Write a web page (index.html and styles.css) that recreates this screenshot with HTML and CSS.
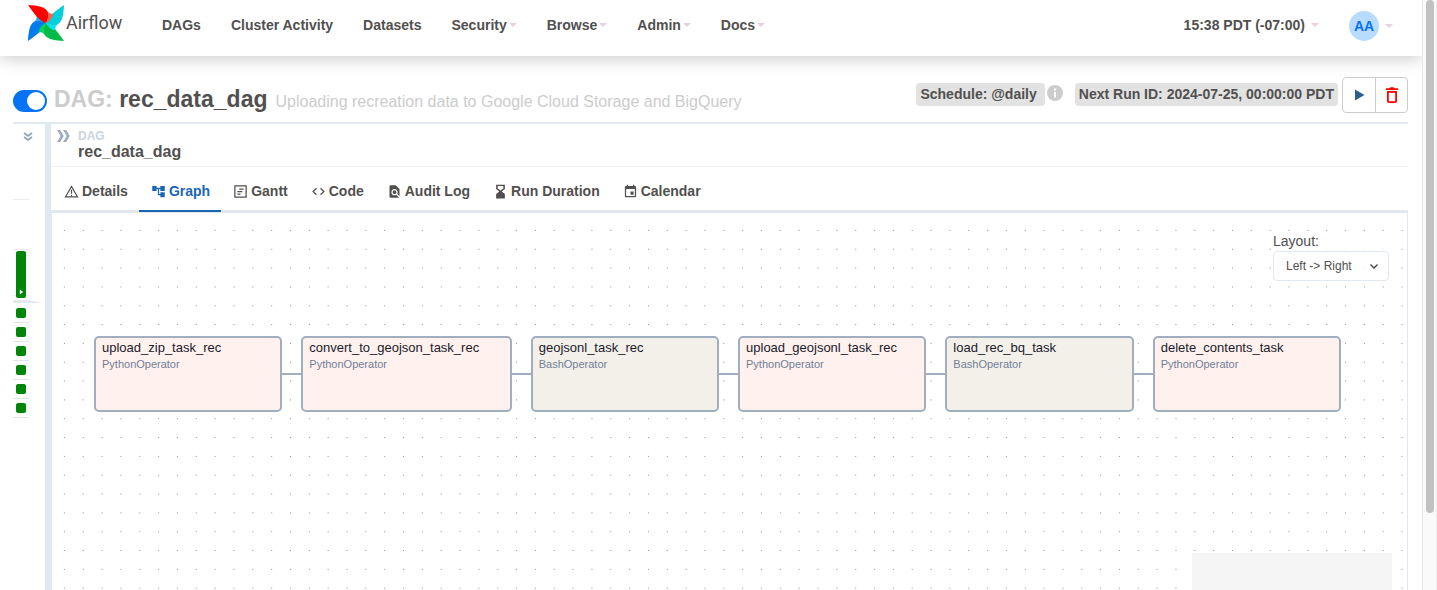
FILE: index.html
```html
<!DOCTYPE html>
<html lang="en">
<head>
<meta charset="utf-8">
<title>rec_data_dag - Graph - Airflow</title>
<link rel="stylesheet" href="styles.css">
</head>
<body>
<div class="page">
  <header class="navbar">
    <a class="brand" href="#">
      <svg class="brand-mark" viewBox="0 0 36 36" aria-hidden="true">
        <defs>
          <path id="blade" d="M0 0C8 .5 19 1 20.500 9C20.800 12 19.500 15 18 18C12 16.500 7 10 0 0Z"/>
          <path id="fold" d="M20 7C21.500 8.500 23.500 9 25 8.500C25.500 12 22 16 18 18C19.500 15 20.800 11 20 7Z"/>
        </defs>
        <use href="#blade" fill="#017cee" transform="rotate(270 18 18)"/>
        <use href="#fold" fill="#0cb6ff" transform="rotate(270 18 18)"/>
        <use href="#blade" fill="#00bb45" transform="rotate(180 18 18)"/>
        <use href="#fold" fill="#04d659" transform="rotate(180 18 18)"/>
        <use href="#blade" fill="#00d0dc" transform="rotate(90 18 18)"/>
        <use href="#fold" fill="#11e1ee" transform="rotate(90 18 18)"/>
        <use href="#blade" fill="#ff0000"/>
        <use href="#fold" fill="#ff6048"/>
      </svg>
      <span>Airflow</span>
    </a>
    <nav class="menu">
      <a href="#">DAGs</a>
      <a href="#">Cluster Activity</a>
      <a href="#">Datasets</a>
      <a href="#">Security<i class="caret"></i></a>
      <a href="#">Browse<i class="caret"></i></a>
      <a href="#">Admin<i class="caret"></i></a>
      <a href="#">Docs<i class="caret"></i></a>
    </nav>
    <nav class="menu menu-right">
      <a class="clock" href="#">15:38 PDT (-07:00)<i class="caret"></i></a>
      <a class="user" href="#"><span class="avatar">AA</span><i class="caret"></i></a>
    </nav>
  </header>

  <main>
    <div class="title-row">
      <input class="switch" type="checkbox" checked aria-label="Pause or unpause DAG">
      <h1><span class="muted">DAG:</span> rec_data_dag</h1>
      <span class="description">Uploading recreation data to Google Cloud Storage and BigQuery</span>
      <div class="title-side">
        <a class="tag tag-schedule" href="#">Schedule: @daily</a>
        <svg class="info" viewBox="0 0 16 16" aria-hidden="true"><circle cx="8" cy="8" r="8" fill="#ccc"/><path d="M7 3.500h2v2H7zM7 7h2v5.500H7z" fill="#fff"/></svg>
        <span class="tag">Next Run ID: 2024-07-25, 00:00:00 PDT</span>
        <div class="actions">
          <button type="button" aria-label="Trigger DAG"><svg viewBox="0 0 20 20"><path d="M6 4.500v11L15.500 10z" fill="#2c5f8a"/></svg></button>
          <button type="button" aria-label="Delete DAG"><svg viewBox="0 0 20 20"><path d="M4 3.200h3.500l1-1h3l1 1H16V5H4z" fill="#f00"/><path d="M5.900 6.900h8.200v9.200q0 1-1 1H6.900q-1 0-1-1z" fill="none" stroke="#f00" stroke-width="1.800"/></svg></button>
        </div>
      </div>
    </div>

    <div class="workspace">
      <aside class="grid-panel">
        <button class="expand" type="button" aria-label="Expand grid"><svg viewBox="0 0 10 10"><path d="M1 1l4 3 4-3M1 5l4 3 4-3" fill="none" stroke="#8fa3bb" stroke-width="1.700"/></svg></button>
        <div class="runs">
          <div class="run"><svg viewBox="0 0 6 6"><path d="M1 0v6l4-3z" fill="#fff"/></svg></div>
        </div>
        <svg class="wedge" viewBox="0 0 30 4" aria-hidden="true"><path d="M0 0h15l15 3H0z" fill="#e2e8f0"/></svg>
        <ul class="tasks">
          <li></li><li></li><li></li><li></li><li></li><li></li>
        </ul>
      </aside>

      <section class="detail">
        <div class="crumb">
          <svg class="collapse" viewBox="0 0 13 12" aria-hidden="true"><path d="M0 0h3.200l3.600 6-3.600 6H0l3.600-6zM6 0h3.200l3.600 6-3.600 6H6l3.600-6z" fill="#a0aec0"/></svg>
          <div>
            <div class="crumb-label">DAG</div>
            <div class="crumb-name">rec_data_dag</div>
          </div>
        </div>

        <div class="tabs" role="tablist">
          <button type="button" role="tab"><svg viewBox="0 0 24 24"><path d="M12 4L21.500 20.500H2.500zM12 9v6.500M12 17v2.200" fill="none" stroke="currentColor" stroke-width="2"/></svg>Details</button>
          <button class="active" type="button" role="tab" aria-selected="true"><svg viewBox="0 0 24 24"><path fill="currentColor" d="M22 11V3h-7v3H9V3H2v8h7V8h2v10h4v3h7v-8h-7v3h-2V8h2v3z"/></svg>Graph</button>
          <button type="button" role="tab"><svg viewBox="0 0 24 24"><path d="M3 3h18v18H3zM10 8h7M7 12h8M7 16h5" fill="none" stroke="currentColor" stroke-width="2"/></svg>Gantt</button>
          <button type="button" role="tab"><svg viewBox="0 0 24 24"><path d="M8.700 6.700L3.400 12l5.300 5.300M15.300 6.700l5.300 5.300-5.300 5.300" fill="none" stroke="currentColor" stroke-width="2"/></svg>Code</button>
          <button type="button" role="tab"><svg viewBox="0 0 24 24"><path fill="currentColor" d="M20 19.590V8l-6-6H6a2 2 0 0 0-2 2v16c0 1.100.890 2 1.990 2H18c.450 0 .850-.150 1.190-.400l-4.430-4.430c-.8.520-1.740.830-2.760.830-2.760 0-5-2.240-5-5s2.240-5 5-5 5 2.240 5 5c0 1.020-.310 1.960-.830 2.750L20 19.590zM9 13c0 1.660 1.340 3 3 3s3-1.340 3-3-1.340-3-3-3-3 1.340-3 3z"/></svg>Audit Log</button>
          <button type="button" role="tab"><svg viewBox="0 0 24 24"><path fill="currentColor" fill-rule="evenodd" d="M5 1v7l5 4-5 4v7h14v-7l-5-4 5-4V1zM7.500 3h9v4L12 10.500 7.500 7z"/></svg>Run Duration</button>
          <button type="button" role="tab"><svg viewBox="0 0 24 24"><path fill="currentColor" fill-rule="evenodd" d="M19 3h-1V1h-2v2H8V1H6v2H5a2 2 0 0 0-2 2v14c0 1.100.9 2 2 2h14a2 2 0 0 0 2-2V5a2 2 0 0 0-2-2zM5 8h14v11H5zM12 12h5v5h-5z"/></svg>Calendar</button>
        </div>

        <div class="graph">
          <svg class="dots" aria-hidden="true">
            <defs><pattern id="dot" width="18.840" height="18.830" patternUnits="userSpaceOnUse" x="3" y="8"><circle cx="9.400" cy="9.400" r=".6" fill="#81818a"/></pattern></defs>
            <rect width="100%" height="100%" fill="url(#dot)"/>
          </svg>
          <div class="flow">
            <div class="node python"><strong>upload_zip_task_rec</strong><span>PythonOperator</span></div>
            <i class="edge"></i>
            <div class="node python wide"><strong>convert_to_geojson_task_rec</strong><span>PythonOperator</span></div>
            <i class="edge"></i>
            <div class="node bash"><strong>geojsonl_task_rec</strong><span>BashOperator</span></div>
            <i class="edge"></i>
            <div class="node python"><strong>upload_geojsonl_task_rec</strong><span>PythonOperator</span></div>
            <i class="edge"></i>
            <div class="node bash"><strong>load_rec_bq_task</strong><span>BashOperator</span></div>
            <i class="edge"></i>
            <div class="node python"><strong>delete_contents_task</strong><span>PythonOperator</span></div>
          </div>
          <div class="layout-panel">
            <label for="layout">Layout:</label>
            <div class="select-wrap">
              <select id="layout"><option>Left -&gt; Right</option><option>Top -&gt; Bottom</option></select>
              <svg viewBox="0 0 10 10" aria-hidden="true"><path d="M1.500 3.500L5 7l3.500-3.500" fill="none" stroke="#444" stroke-width="1.400"/></svg>
            </div>
          </div>
          <div class="minimap"></div>
        </div>
      </section>
    </div>
  </main>
</div>
<div class="scroll-track"><div class="scroll-thumb"></div></div>
</body>
</html>
```

FILE: styles.css
```css
* { box-sizing: border-box; }

body {
  margin: 0;
  height: 100vh;
  display: flex;
  overflow: hidden;
  background: #fff;
  color: #51504f;
  font: 14px/20px "Liberation Sans", Arial, sans-serif;
}

a { color: inherit; text-decoration: none; }
button { font: inherit; color: inherit; background: none; border: 0; padding: 0; }
svg { display: block; }

.page { flex: 1; min-width: 0; display: flex; flex-direction: column; overflow: hidden; }

/* Top navigation */
.navbar {
  display: flex;
  height: 56px;
  flex: none;
  padding: 0 14px 0 28px;
  box-shadow: 0 3px 16px rgba(0, 0, 0, .2);
}
.brand { display: flex; gap: 2px; width: 119px; padding-top: 5px; font: 18px/36px Roboto, sans-serif; }
.brand-mark { flex: none; width: 36px; height: 36px; }
.menu { display: flex; height: 50px; align-items: center; font-weight: bold; }
.menu a { display: flex; align-items: center; padding: 0 15px; }
.menu-right { margin-left: auto; }
.caret { margin-left: 2px; border: 4px solid transparent; border-top-color: #e8cfe2; border-bottom: 0; }
.menu .clock { gap: 4px; }
.menu .user { gap: 4px; padding-top: 2px; }
.avatar { width: 30px; height: 30px; border-radius: 50%; background: #b8dcff; color: #0672f4; line-height: 30px; text-align: center; }

/* Title */
main { flex: 1; min-height: 0; display: flex; flex-direction: column; padding: 21px 14px 0 13px; }
.title-row { display: flex; align-items: flex-start; height: 47px; flex: none; border-bottom: 2px solid #e2e8f0; }
.switch { appearance: none; flex: none; width: 34px; height: 22px; margin: 13px 7px 0 0; border-radius: 11px; background: #0672f4; padding: 2px; display: flex; justify-content: flex-end; }
.switch::before { content: ""; width: 18px; height: 18px; border-radius: 50%; background: #fff; }
h1 { margin: 8px 8px 0 0; font-size: 23px; line-height: 28px; white-space: nowrap; }
.muted { color: #ccc; }
.description { margin-top: 15px; font-size: 16px; color: #ccc; white-space: nowrap; }
.title-side { display: flex; align-items: flex-start; margin-left: auto; }
.tag { margin-top: 6px; padding: 0 4px; border-radius: 4px; background: #e2e2e2; font-weight: bold; line-height: 23px; white-space: nowrap; }
.tag-schedule { padding-right: 8px; }
.info { width: 16px; height: 16px; margin: 8px 12px 0 2px; }
.actions { display: flex; margin-left: 4px; border: 1px solid #ccc; border-radius: 4px; }
.actions button { display: flex; align-items: center; justify-content: center; width: 32px; height: 34px; }
.actions button + button { border-left: 1px solid #ccc; }
.actions svg { width: 20px; height: 20px; }

/* Workspace */
.workspace { flex: 1; min-height: 0; display: flex; }
.grid-panel { width: 38px; flex: none; border-right: 6px solid #e2e8f0; }
.expand { display: block; margin: 8px 0 0 10px; }
.expand svg { width: 10px; height: 10px; }
.runs { display: flex; align-items: flex-end; height: 99px; width: 16px; margin-top: 57px; border-top: 1px solid #e9ecf0; background: linear-gradient(#e9ecf0, #e9ecf0) 0 49px / 100% 1px no-repeat, linear-gradient(#e9ecf0, #e9ecf0) 0 95px / 100% 1px no-repeat; }
.run { display: flex; align-items: flex-end; justify-content: center; width: 10px; height: 47px; margin-left: 3px; padding-bottom: 3px; border-radius: 2px; background: #008509; }
.run svg { width: 5px; height: 6px; }
.wedge { width: 30px; height: 4px; margin-top: 2px; }
.tasks { list-style: none; width: 16px; margin: 0; padding: 0; }
.tasks li { height: 19px; padding: 4px 3px; border-bottom: 1px solid #dfe5ee; }
.tasks li::before { content: ""; display: block; width: 10px; height: 10px; border-radius: 2px; background: #008509; }

.detail { flex: 1; min-width: 0; display: flex; flex-direction: column; }
.crumb { display: flex; gap: 8px; height: 43px; padding: 5px 0 0 6px; border-bottom: 1px solid #edf0f5; }
.collapse { width: 13px; height: 12px; margin-top: 1px; }
.crumb-label { font-size: 12px; font-weight: bold; line-height: 14px; color: #cbd5e0; }
.crumb-name { font-size: 16px; font-weight: bold; line-height: 18px; }

.tabs { display: flex; height: 46px; flex: none; padding: 5px 0 0 1px; border-bottom: 3px solid #e2e8f0; }
.tabs button { display: flex; align-items: center; gap: 3px; height: 40px; padding: 0 11px 0 12px; font-weight: bold; border-bottom: 2px solid transparent; white-space: nowrap; }
.tabs svg { width: 15px; height: 15px; }
.tabs .active { color: #1a66b5; border-color: #1a66b5; }

/* Graph canvas */
.graph { position: relative; flex: 1; min-height: 0; border: 1px solid #e2e8f0; border-width: 0 1px; overflow: hidden; }
.dots { position: absolute; width: 100%; height: 100%; }
.flow { position: absolute; top: 123px; left: 42px; right: 66px; display: flex; align-items: center; }
.node { flex: 172 1 0; height: 76px; padding: 1px 6px; border: 2px solid #a0aec0; border-radius: 5px; color: #1a202c; }
.node.wide { flex-grow: 194; }
.python { background: #fff1ee; }
.bash { background: #f3f0e9; }
.node strong { display: block; font-size: 13px; font-weight: normal; line-height: 18px; white-space: nowrap; }
.node span { display: block; font-size: 11px; line-height: 15px; color: #718096; }
.edge { width: 19px; height: 2px; background: #a0aec0; }
.layout-panel { position: absolute; top: 18px; right: 18px; width: 116px; background: rgba(255, 255, 255, .8); }
.layout-panel label { display: block; }
.select-wrap { display: grid; align-items: center; }
.select-wrap > * { grid-area: 1 / 1; }
.select-wrap svg { width: 10px; height: 10px; margin-right: 10px; justify-self: end; pointer-events: none; }
select { appearance: none; width: 100%; height: 30px; padding: 0 12px; border: 1px solid #e2e8f0; border-radius: 4px; background: transparent; color: inherit; font: 12px "Liberation Sans", Arial, sans-serif; }
.minimap { position: absolute; right: 15px; bottom: -113px; width: 200px; height: 150px; background: #f5f5f5; }

/* Window scrollbar */
.scroll-track { flex: none; width: 15px; padding: 0 3px; border-left: 1px solid #e8e8e8; border-right: 1px solid #ededed; background: #fafafa; }
.scroll-thumb { width: 8px; height: 87%; border-radius: 4px; background: #c1c1c1; }
```
